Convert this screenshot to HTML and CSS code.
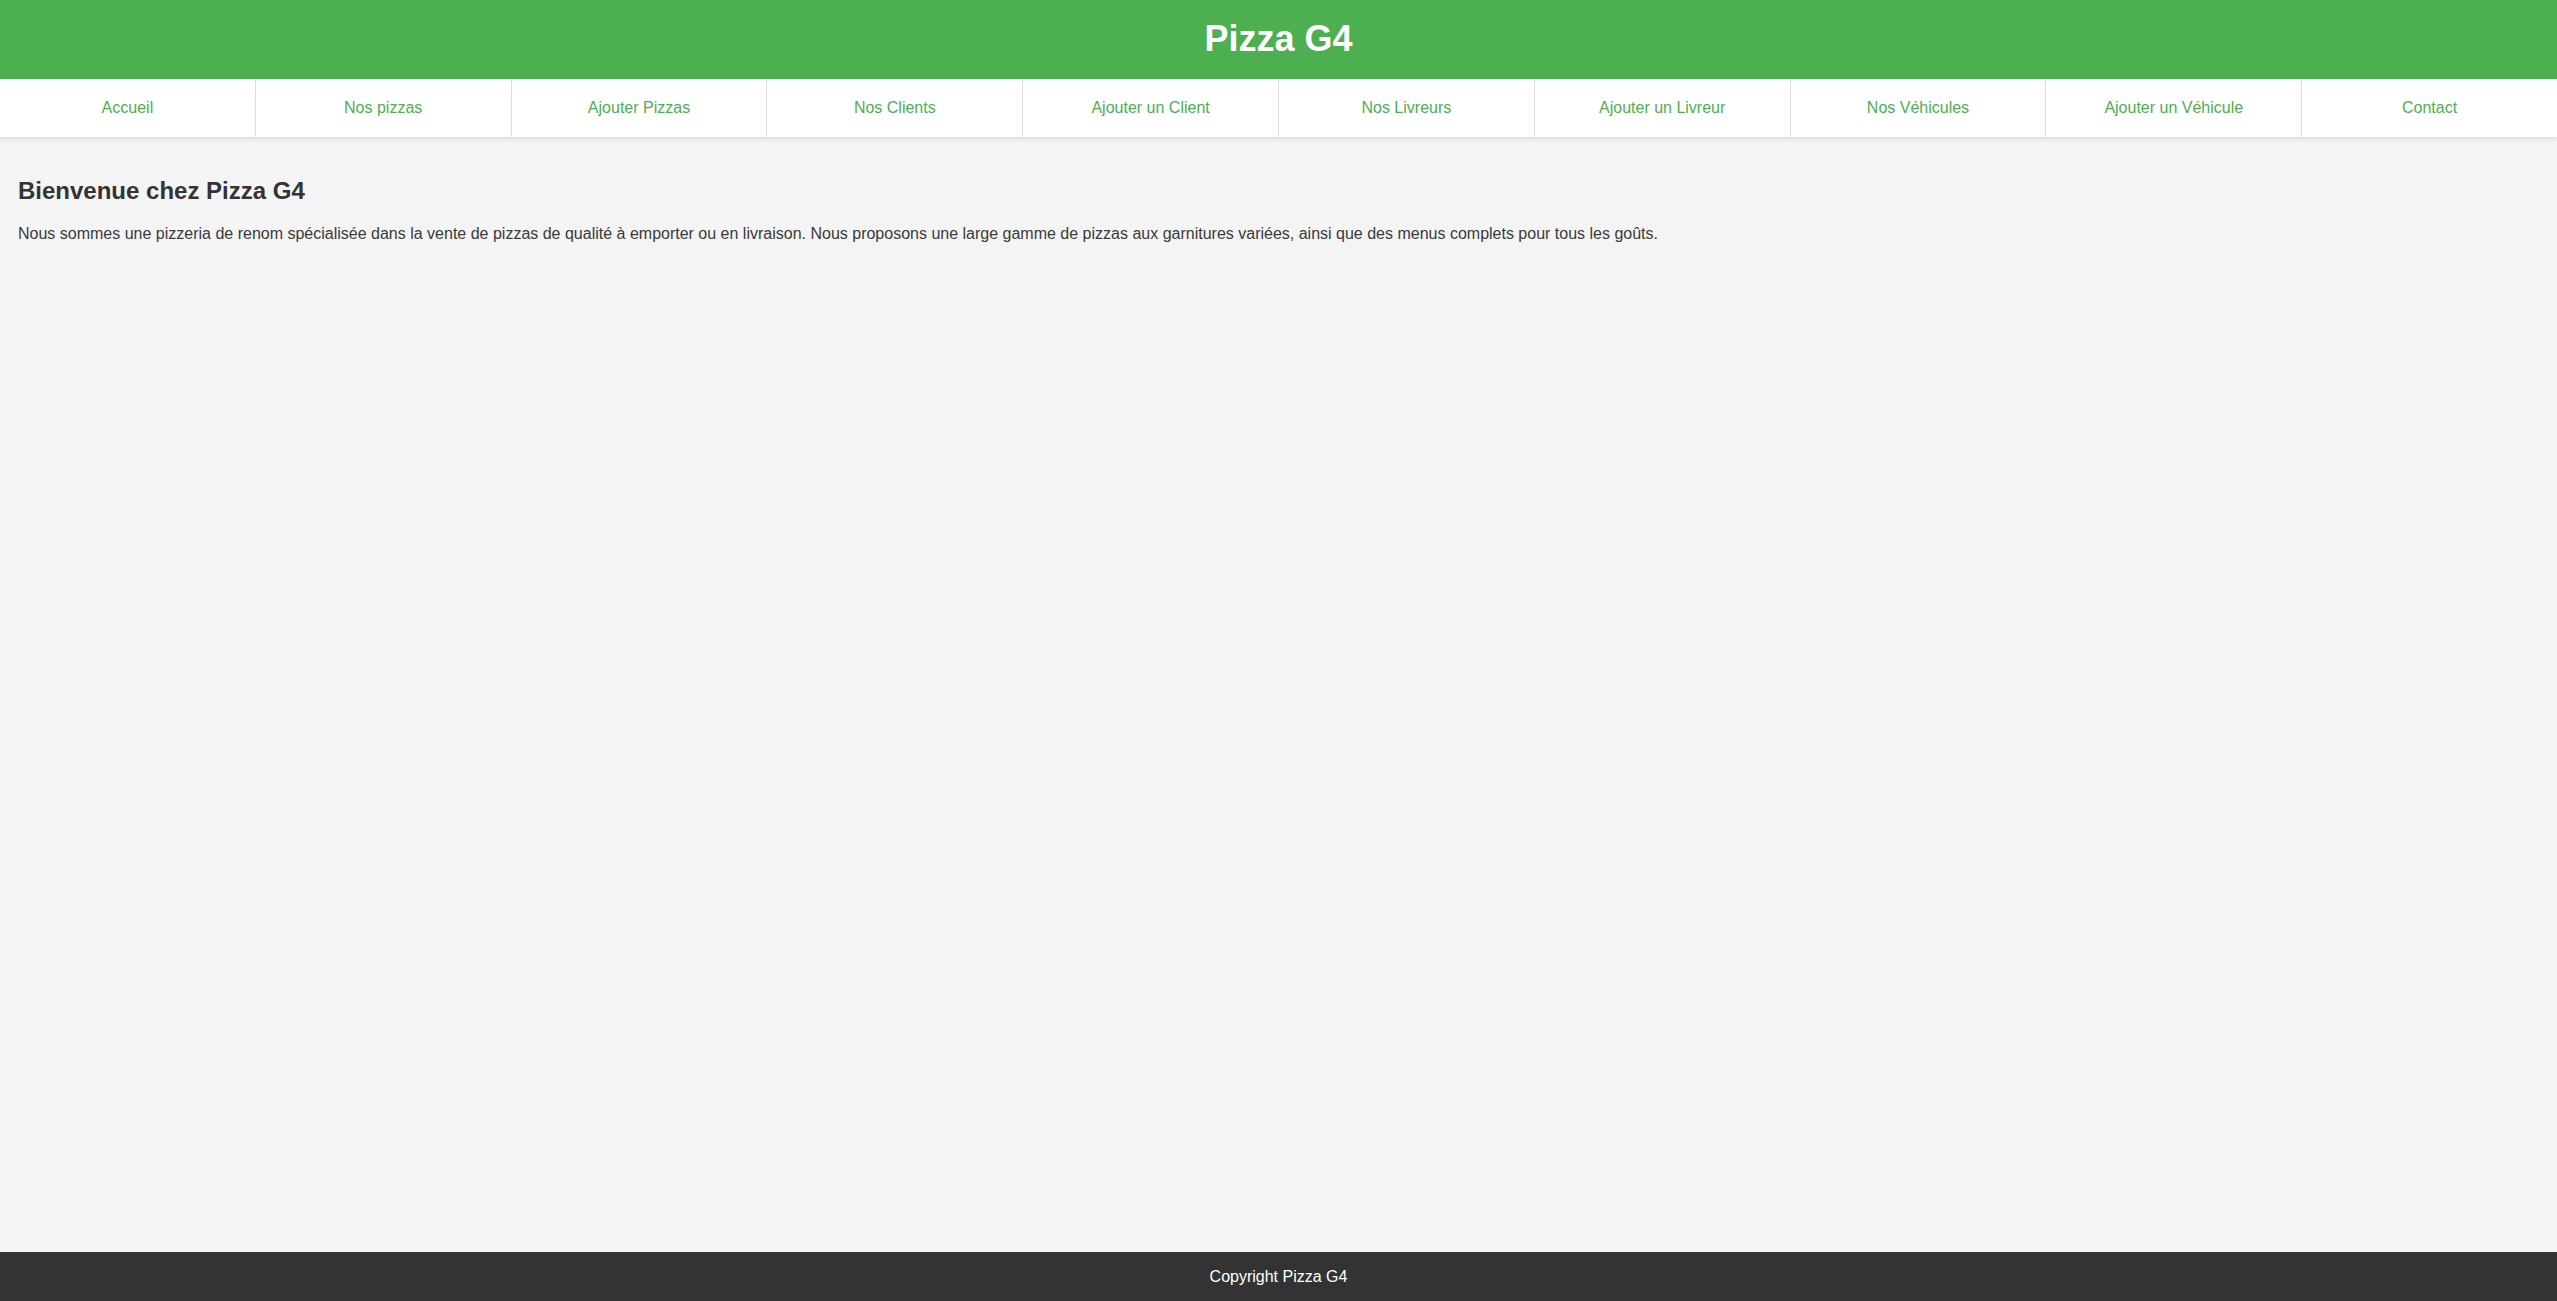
FILE: index.html
```html
<!DOCTYPE html>
<html lang="fr">
<head>
<meta charset="utf-8">
<title>Pizza G4</title>
<link rel="stylesheet" href="styles.css">
</head>
<body>
<header class="site-header">
  <h1 class="site-title">Pizza G4</h1>
</header>
<nav class="site-nav">
  <a class="nav-link" href="#">Accueil</a>
  <a class="nav-link" href="#">Nos pizzas</a>
  <a class="nav-link" href="#">Ajouter Pizzas</a>
  <a class="nav-link" href="#">Nos Clients</a>
  <a class="nav-link" href="#">Ajouter un Client</a>
  <a class="nav-link" href="#">Nos Livreurs</a>
  <a class="nav-link" href="#">Ajouter un Livreur</a>
  <a class="nav-link" href="#">Nos Véhicules</a>
  <a class="nav-link" href="#">Ajouter un Véhicule</a>
  <a class="nav-link" href="#">Contact</a>
</nav>
<main class="content">
  <h2 class="welcome-title">Bienvenue chez Pizza G4</h2>
  <p class="welcome-text">Nous sommes une pizzeria de renom spécialisée dans la vente de pizzas de qualité à emporter ou en livraison. Nous proposons une large gamme de pizzas aux garnitures variées, ainsi que des menus complets pour tous les goûts.</p>
</main>
<footer class="site-footer">
  <p class="footer-text">Copyright Pizza G4</p>
</footer>
</body>
</html>
```
FILE: styles.css
```css
html, body {
  margin: 0;
  padding: 0;
}
body {
  font-family: "Liberation Sans", Arial, sans-serif;
  background: #f4f4f4;
  color: #333;
  min-height: 100vh;
  display: flex;
  flex-direction: column;
}
.site-header {
  background: #4caf50;
  color: #fff;
  text-align: center;
  padding: 18px 0 20px;
}
.site-title {
  margin: 0;
  font-size: 36px;
  font-weight: bold;
  line-height: 41px;
}
.site-nav {
  display: flex;
  background: #fff;
  box-shadow: 0 2px 4px rgba(0, 0, 0, 0.1);
}
.nav-link {
  flex: 1 1 0;
  text-align: center;
  padding: 20px 0;
  font-size: 16px;
  line-height: 18px;
  color: #4caf50;
  text-decoration: none;
  border-right: 1px solid #ddd;
}
.nav-link:last-child {
  border-right: none;
}
.content {
  padding: 20px 18px;
}
.welcome-title {
  font-size: 24px;
  margin: 20px 0;
  color: #333;
}
.welcome-text {
  font-size: 16px;
  margin: 16px 0;
  color: #3a3a3a;
}
.site-footer {
  margin-top: auto;
  background: #333;
  color: #fff;
  text-align: center;
  padding: 15px 0;
}
.footer-text {
  margin: 0;
  font-size: 16px;
  line-height: 19px;
}
```
